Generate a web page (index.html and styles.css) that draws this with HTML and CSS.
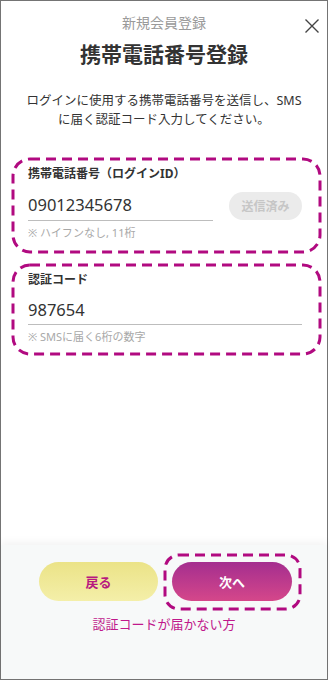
FILE: index.html
```html
<!DOCTYPE html>
<html>
<head>
    <title>携帯電話番号登録</title>
    <link rel="stylesheet" href="styles.css">
</head>
<body>
    <div class="frame">
        <div class="main">
            <div class="header">
                <div></div>
                <div class="subtitle">新規会員登録</div>
                <button class="close-btn" aria-label="閉じる">
                    <svg width="16" height="16" viewBox="0 0 16 16">
                        <path d="M1.5 1.5 L14.5 14.5 M14.5 1.5 L1.5 14.5" stroke="#444" stroke-width="1.4" fill="none"/>
                    </svg>
                </button>
            </div>
            <h1 class="title">携帯電話番号登録</h1>
            <p class="lead">ログインに使用する携帯電話番号を送信し、SMS<br>に届く認証コード入力してください。</p>

            <div class="field-box">
                <svg class="dash"><rect width="100%" height="100%" rx="17" ry="17"/></svg>
                <div class="field-label">携帯電話番号（ログインID）</div>
                <div class="field-row">
                    <div class="field-input">09012345678</div>
                    <button class="send-btn" disabled>送信済み</button>
                </div>
                <div class="field-hint">※ ハイフンなし, 11桁</div>
            </div>

            <div class="field-box code-box">
                <svg class="dash"><rect width="100%" height="100%" rx="17" ry="17"/></svg>
                <div class="field-label">認証コード</div>
                <div class="field-row">
                    <div class="field-input">987654</div>
                </div>
                <div class="field-hint">※ SMSに届く6桁の数字</div>
            </div>
        </div>

        <div class="footer">
            <div class="btn-row">
                <button class="btn btn-back">戻る</button>
                <div class="next-wrap">
                    <svg class="dash"><rect width="100%" height="100%" rx="14" ry="14"/></svg>
                    <button class="btn btn-next">次へ</button>
                </div>
            </div>
            <a class="help-link" href="#">認証コードが届かない方</a>
        </div>
    </div>
</body>
</html>
```

FILE: styles.css
```css
body {
    margin: 0;
    font-family: "Noto Sans", "Noto Sans CJK JP", sans-serif;
    color: #333;
    background-color: #fff;
}
.frame {
    width: 328px;
    height: 680px;
    box-sizing: border-box;
    border: 1px solid #747474;
    display: flex;
    flex-direction: column;
    background-color: #fff;
}
.main {
    flex: 1;
    display: flex;
    flex-direction: column;
}
.header {
    display: grid;
    grid-template-columns: 30px 1fr 30px;
    padding-top: 12px;
}
.subtitle {
    text-align: center;
    font-size: 14px;
    line-height: 20px;
    color: #9a9a9a;
}
.close-btn {
    background: none;
    border: none;
    padding: 0;
    margin-top: 5px;
    width: 16px;
    height: 16px;
    justify-self: start;
    margin-left: 7px;
    cursor: pointer;
}
.title {
    margin: 6px 0 0;
    text-align: center;
    font-size: 21px;
    line-height: 28px;
    font-weight: bold;
    color: #333;
}
.lead {
    margin: 24px 0 0;
    text-align: center;
    font-size: 12.5px;
    line-height: 18.5px;
    color: #333;
}

/* dashed outline drawn as svg so the dash length matches */
.dash {
    position: absolute;
    top: 1.5px;
    left: 1.5px;
    width: calc(100% - 3px);
    height: calc(100% - 3px);
    overflow: visible;
    pointer-events: none;
}
.dash rect {
    fill: none;
    stroke: #b10a80;
    stroke-width: 3;
    stroke-dasharray: 10 6;
}
.field-box {
    position: relative;
    margin: 28px 6px 0 10px;
    padding: 9px 19px 13px 17px;
    border-radius: 18px;
}
.code-box {
    margin-top: 10px;
    padding-bottom: 11px;
}
.field-label {
    font-size: 12px;
    line-height: 16px;
    font-weight: bold;
    color: #333;
}
.field-row {
    display: flex;
    align-items: center;
    gap: 16px;
    margin-top: 8px;
}
.field-input {
    flex: 1;
    height: 30px;
    line-height: 30px;
    font-size: 16.5px;
    color: #333;
    border-bottom: 1px solid #bdbdbd;
}
.code-box .field-input {
    height: 28px;
    line-height: 28px;
}
.send-btn {
    width: 73px;
    height: 28px;
    border: none;
    border-radius: 14px;
    background-color: #ebebeb;
    color: #c6c6c6;
    font-family: inherit;
    font-size: 12px;
    font-weight: bold;
    padding: 0;
}
.field-hint {
    margin-top: 5px;
    font-size: 11px;
    line-height: 14px;
    color: #a8a8a8;
}
.footer {
    height: 134px;
    background-color: #f7f9f9;
    box-shadow: 0 -3px 8px rgba(0,0,0,0.05);
    display: flex;
    flex-direction: column;
    align-items: center;
    padding-top: 8px;
    box-sizing: border-box;
}
.btn-row {
    display: flex;
    align-items: center;
    gap: 5px;
    align-self: flex-start;
    padding-left: 38px;
}
.btn {
    height: 39px;
    border: none;
    border-radius: 20px;
    font-family: inherit;
    font-size: 13px;
    font-weight: bold;
    cursor: pointer;
}
.btn-back {
    width: 119px;
    background: linear-gradient(#ebe387, #f4efa9);
    color: #b8197f;
}
.next-wrap {
    position: relative;
    padding: 9px;
}
.btn-next {
    display: block;
    width: 120px;
    background: linear-gradient(#a42e8f, #d5478a);
    color: #fff;
}
.help-link {
    margin-top: 5px;
    font-size: 13px;
    line-height: 18px;
    color: #c0198c;
    text-decoration: none;
}
```
